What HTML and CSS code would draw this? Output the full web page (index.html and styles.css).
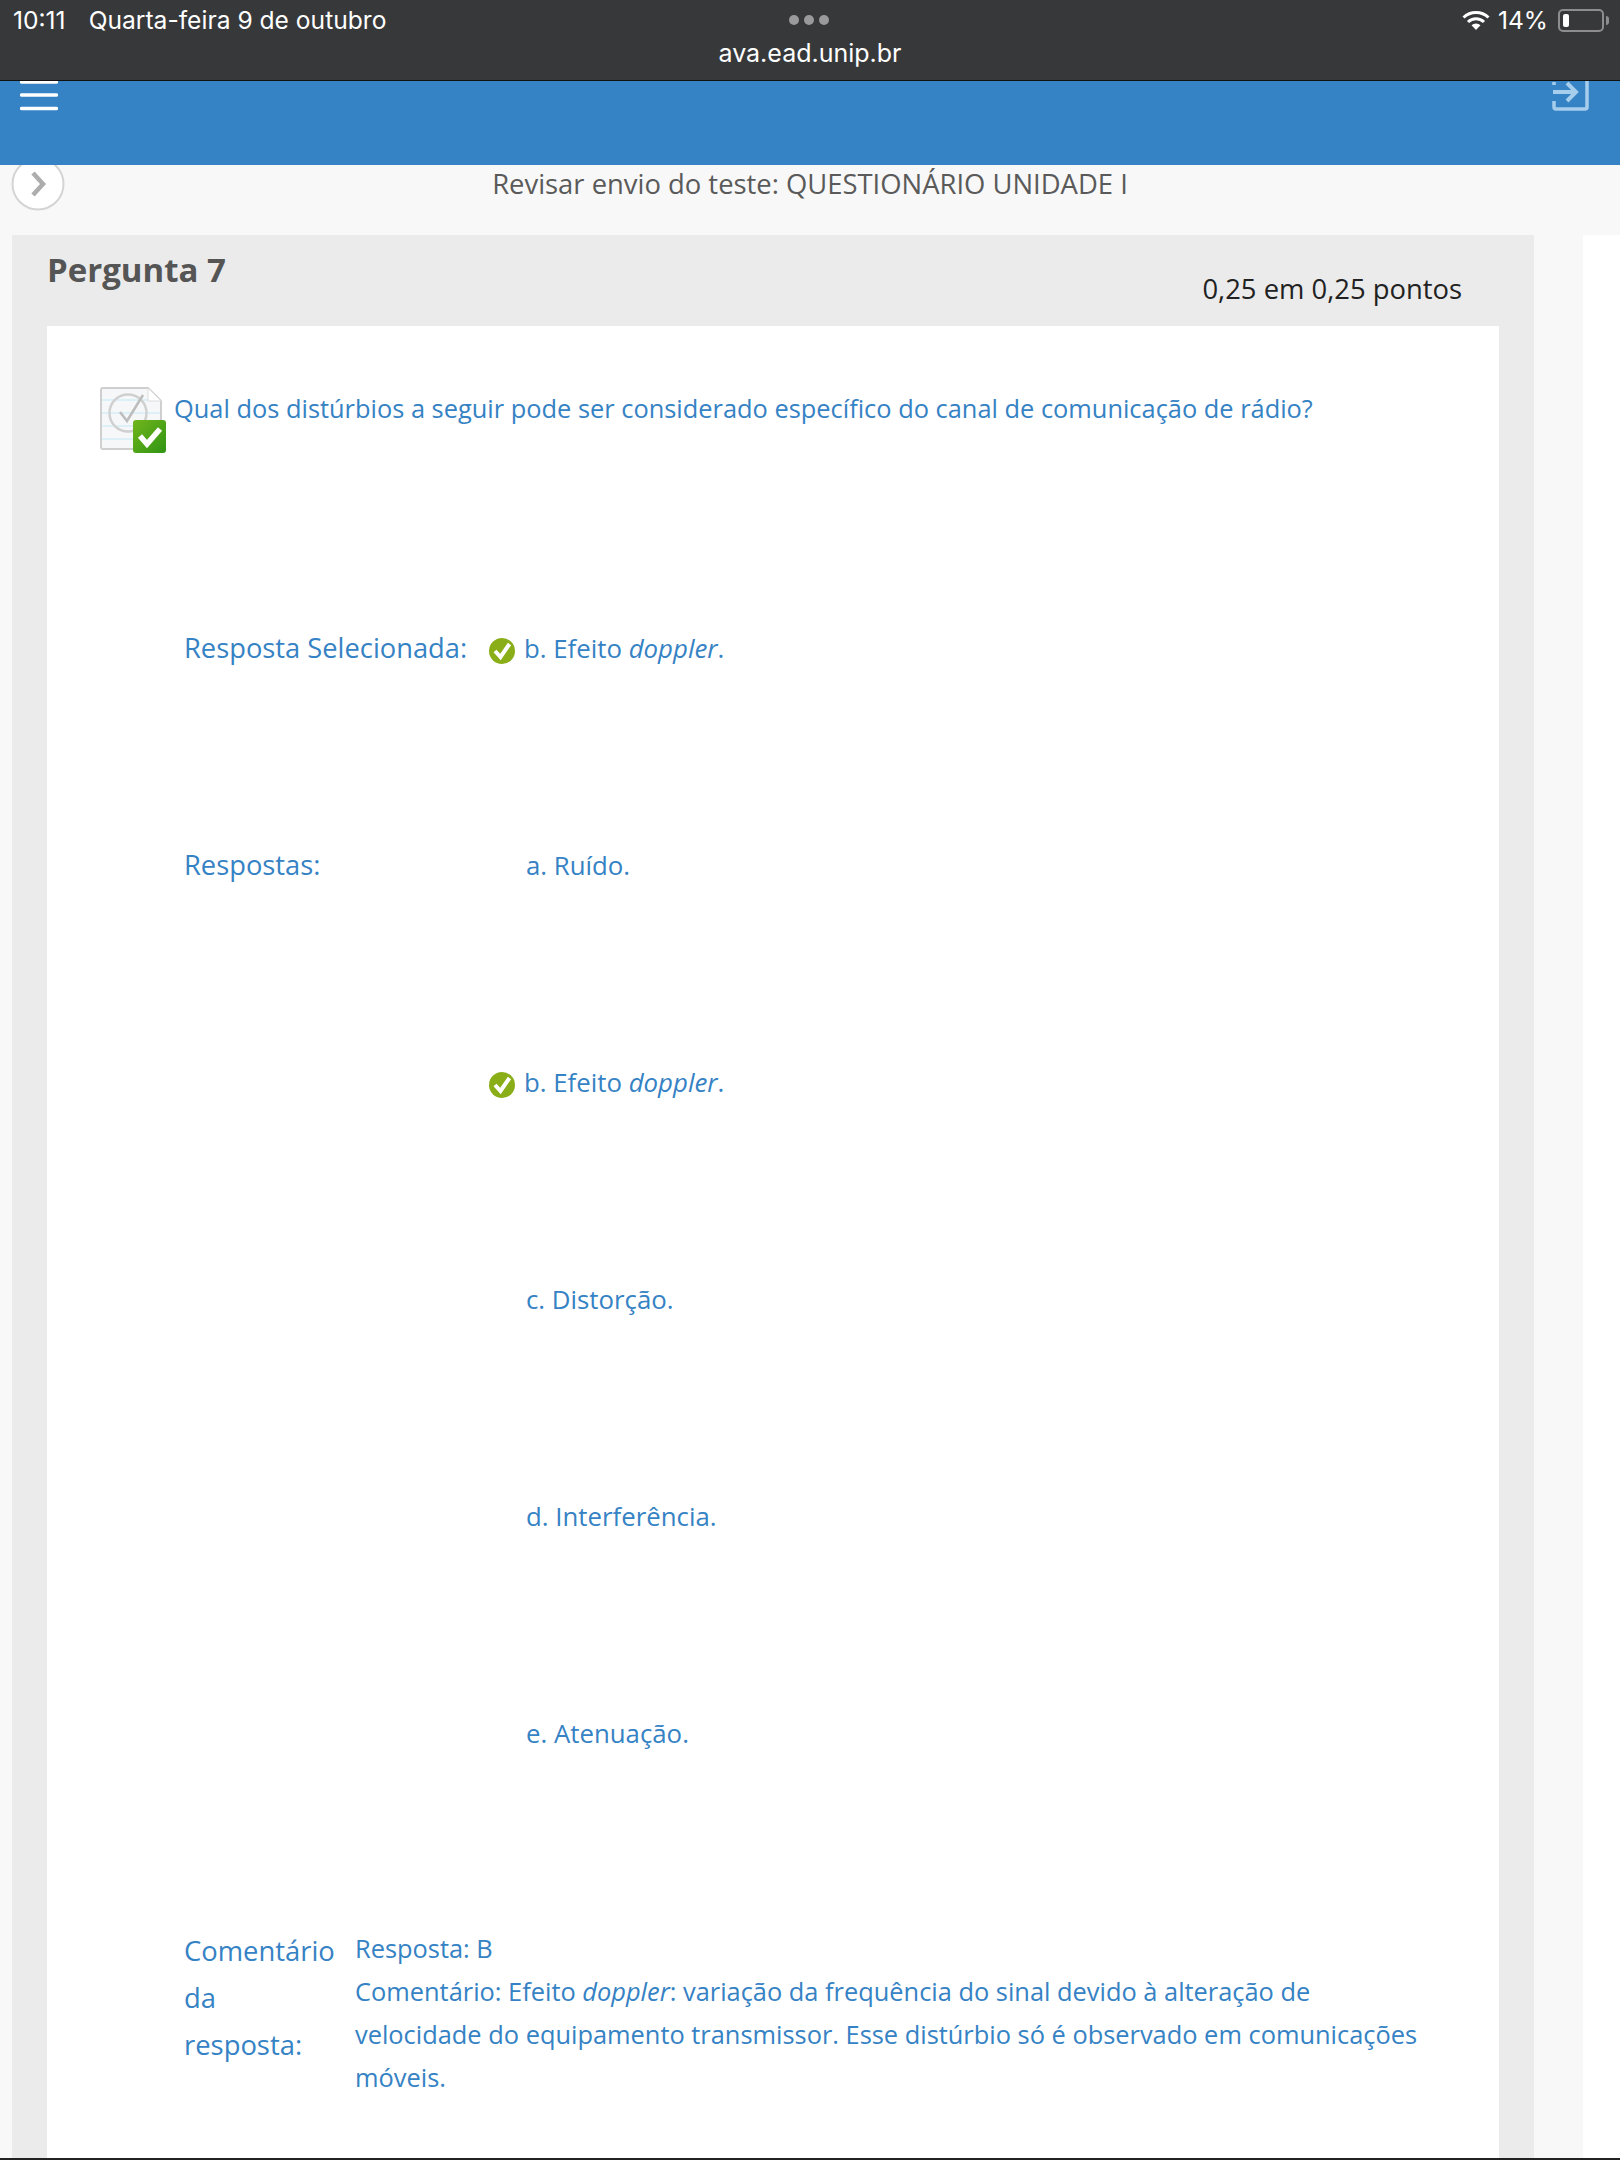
FILE: index.html

```html
<!DOCTYPE html>
<html lang="pt-BR">
<head>
    <meta charset="UTF-8">
    <title>Revisar envio do teste</title>
    <link rel="stylesheet" href="styles.css">
</head>
<body>
    <div class="status-bar">
        <div class="status-row">
            <span class="clock">10:11</span>
            <span class="date">Quarta-feira 9 de outubro</span>
            <span class="dots"><i></i><i></i><i></i></span>
            <span class="status-right">
                <svg class="wifi" width="28" height="22" viewBox="0 0 28 22">
                    <path d="M1.500 8.500a18 18 0 0 1 25 0" fill="none" stroke="#fff" stroke-width="3"/>
                    <path d="M6 13a11.500 11.500 0 0 1 16 0" fill="none" stroke="#fff" stroke-width="3"/>
                    <path d="M14 21l-4.500-4.800a6.500 6.500 0 0 1 9 0z" fill="#fff"/>
                </svg>
                <span class="battery-text">14%</span>
                <span class="battery"><i></i></span>
                <span class="battery-tip"></span>
            </span>
        </div>
        <div class="url">ava.ead.unip.br</div>
    </div>

    <header class="top-bar">
        <svg class="menu-icon" width="38" height="30" viewBox="0 0 38 30">
            <path d="M1.500 1h35M1.500 14h35M1.500 27.500h35" stroke="#fff" stroke-width="3.500" stroke-linecap="round"/>
        </svg>
        <svg class="exit-icon" width="37" height="30" viewBox="0 0 37 30">
            <path d="M2 1v3M2 20v6a2 2 0 0 0 2 2h29a2 2 0 0 0 2-2v-30" fill="none" stroke="#a6cdec" stroke-width="3.500"/>
            <path d="M1 11h21M15 2l9 9-9 9" fill="none" stroke="#a6cdec" stroke-width="4"/>
        </svg>
    </header>

    <div class="sub-bar">
        <svg class="back-btn" width="56" height="48" viewBox="0 0 56 48">
            <circle cx="27" cy="19" r="25.500" fill="#fff" stroke="#d4d4d4" stroke-width="2"/>
            <path d="M22 8l10 11-10 11" fill="none" stroke="#adadad" stroke-width="4.500"/>
        </svg>
        <h2 class="page-title">Revisar envio do teste: QUESTIONÁRIO UNIDADE I</h2>
    </div>

    <div class="content">
        <section class="question">
            <div class="question-head">
                <h3>Pergunta 7</h3>
                <span class="points">0,25 em 0,25 pontos</span>
            </div>
            <div class="question-body">
                <div class="question-text">
                    <svg class="doc-icon" width="68" height="68" viewBox="0 0 68 68">
                        <defs>
                            <linearGradient id="badge" x1="0" y1="0" x2="1" y2="1">
                                <stop offset="0" stop-color="#72b51c"/>
                                <stop offset="1" stop-color="#2f9414"/>
                            </linearGradient>
                        </defs>
                        <path d="M2 4a2 2 0 0 1 2-2h45l13 13v46a2 2 0 0 1-2 2h-56a2 2 0 0 1-2-2z" fill="#f5f7f8" stroke="#cfcfcf" stroke-width="2"/>
                        <path d="M3 14h58M3 27h58M3 40h58M3 53h58" stroke="#d5eef7" stroke-width="1.500"/>
                        <path d="M49 2v13h13z" fill="#fff" stroke="#dcdcdc"/>
                        <circle cx="29" cy="27" r="18.500" fill="none" stroke="#d0d0d0" stroke-width="2.500"/>
                        <path d="M21 26l7 9 16-26" fill="none" stroke="#bdbdbd" stroke-width="2.500"/>
                        <rect x="34" y="34" width="33" height="33" rx="3" fill="url(#badge)"/>
                        <path d="M41 50l7 8 13-15" fill="none" stroke="#fff" stroke-width="5.500"/>
                    </svg>
                    <p>Qual dos distúrbios a seguir pode ser considerado específico do canal de comunicação de rádio?</p>
                </div>

                <div class="answer-row">
                    <span class="label">Resposta Selecionada:</span>
                    <span class="check">
                        <svg width="28" height="28" viewBox="0 0 28 28">
                            <circle cx="14" cy="14" r="13" fill="#8aae17"/>
                            <path d="M7 14l5.500 6 9-13" fill="none" stroke="#fff" stroke-width="4"/>
                        </svg>
                    </span>
                    <span class="answer">b. Efeito <em>doppler</em>.</span>
                </div>
                <div class="answer-row">
                    <span class="label">Respostas:</span>
                    <span class="check"></span>
                    <span class="answer plain">a. Ruído.</span>
                </div>
                <div class="answer-row">
                    <span class="label"></span>
                    <span class="check">
                        <svg width="28" height="28" viewBox="0 0 28 28">
                            <circle cx="14" cy="14" r="13" fill="#8aae17"/>
                            <path d="M7 14l5.500 6 9-13" fill="none" stroke="#fff" stroke-width="4"/>
                        </svg>
                    </span>
                    <span class="answer">b. Efeito <em>doppler</em>.</span>
                </div>
                <div class="answer-row">
                    <span class="label"></span>
                    <span class="check"></span>
                    <span class="answer plain">c. Distorção.</span>
                </div>
                <div class="answer-row">
                    <span class="label"></span>
                    <span class="check"></span>
                    <span class="answer plain">d. Interferência.</span>
                </div>
                <div class="answer-row">
                    <span class="label"></span>
                    <span class="check"></span>
                    <span class="answer plain">e. Atenuação.</span>
                </div>

                <div class="feedback">
                    <div class="feedback-label">Comentário da resposta:</div>
                    <div class="feedback-text">
                        Resposta: B<br>
                        Comentário: Efeito <em>doppler</em>: variação da frequência do sinal devido à alteração de velocidade do equipamento transmissor. Esse distúrbio só é observado em comunicações móveis.
                    </div>
                </div>
            </div>
        </section>
        <aside class="side-col"></aside>
    </div>
</body>
</html>
```

FILE: styles.css

```css
html, body {
    margin: 0;
    padding: 0;
}

body {
    width: 1620px;
    height: 2160px;
    overflow: hidden;
    display: flex;
    flex-direction: column;
    font-family: "Open Sans", sans-serif;
    background-color: #f8f8f8;
    border-bottom: 2px solid #222;
    box-sizing: border-box;
}

/* browser chrome */
.status-bar {
    height: 81px;
    flex-shrink: 0;
    box-sizing: border-box;
    background-color: #37383a;
    border-bottom: 1px solid #111;
    color: #fff;
    font-family: Inter, sans-serif;
}

.status-row {
    display: flex;
    align-items: center;
    height: 40px;
    padding: 0 0 0 13px;
    font-size: 24.600px;
    position: relative;
}

.date {
    margin-left: 23px;
}

.dots {
    position: absolute;
    left: 789px;
    top: 15px;
    display: flex;
    gap: 5px;
}

.dots i {
    width: 10px;
    height: 10px;
    border-radius: 50%;
    background-color: #9a9a9c;
}

.status-right {
    margin-left: auto;
    margin-right: 11px;
    display: flex;
    align-items: center;
}

.wifi {
    margin-right: 8px;
}

.battery {
    width: 46px;
    height: 23px;
    margin-left: 10px;
    box-sizing: border-box;
    border: 2px solid #8d8d8f;
    border-radius: 5px;
    padding: 3px;
    display: flex;
}

.battery i {
    width: 6px;
    border-radius: 2px;
    background-color: #fff;
}

.battery-tip {
    width: 3px;
    height: 9px;
    margin-left: 2px;
    border-radius: 0 3px 3px 0;
    background-color: #8d8d8f;
}

.url {
    text-align: center;
    font-size: 25px;
    line-height: 32px;
    margin-top: -3px;
}

/* blue bar */
.top-bar {
    height: 84px;
    flex-shrink: 0;
    background-color: #3582c4;
    display: flex;
    justify-content: space-between;
    align-items: flex-start;
    padding: 0 31px 0 20px;
}

.sub-bar {
    height: 70px;
    flex-shrink: 0;
    display: flex;
    align-items: flex-start;
    position: relative;
    overflow: hidden;
}

.back-btn {
    position: absolute;
    left: 11px;
    top: 0;
}

.page-title {
    width: 100%;
    margin: 0;
    text-align: center;
    font-size: 27.400px;
    font-weight: 400;
    line-height: 38px;
    color: #5a5a5a;
}

/* question panel */
.content {
    flex: 1;
    min-height: 0;
    display: flex;
    padding-left: 12px;
}

.question {
    width: 1522px;
    box-sizing: border-box;
    padding: 0 35px;
    display: flex;
    flex-direction: column;
    background-color: #ebebeb;
}

.side-col {
    flex: 1;
    margin-left: 49px;
    background-color: #fff;
}

.question-head {
    height: 91px;
    flex-shrink: 0;
    display: flex;
    justify-content: space-between;
}

.question-head h3 {
    margin: 13px 0 0;
    font-size: 33px;
    line-height: 44px;
    color: #555;
}

.points {
    margin: 34px 37px 0 0;
    font-size: 27.400px;
    line-height: 40px;
    color: #222;
}

.question-body {
    flex: 1;
    background-color: #fff;
    color: #3582c4;
    font-size: 25.400px;
}

.question-text {
    display: flex;
    align-items: flex-start;
    height: 302px;
    padding: 60px 0 0 52px;
    box-sizing: border-box;
}

.question-text p {
    margin: 2px 0 0 7px;
    line-height: 40px;
}

.answer-row {
    height: 217px;
    display: flex;
    align-items: flex-start;
    padding-left: 137px;
    box-sizing: border-box;
    line-height: 40px;
}

.label {
    width: 304px;
    flex-shrink: 0;
    font-size: 27.300px;
}

.check {
    width: 36px;
    flex-shrink: 0;
    padding-top: 9px;
}

.check svg {
    display: block;
}

.answer {
    font-size: 25.800px;
}

.answer.plain {
    margin-left: 2px;
}

.feedback {
    display: flex;
    padding-left: 137px;
    margin-top: -3px;
}

.feedback-label {
    width: 150px;
    flex-shrink: 0;
    font-size: 27.400px;
    line-height: 47px;
}

.feedback-text {
    width: 1070px;
    margin-left: 21px;
    line-height: 43px;
}
```
